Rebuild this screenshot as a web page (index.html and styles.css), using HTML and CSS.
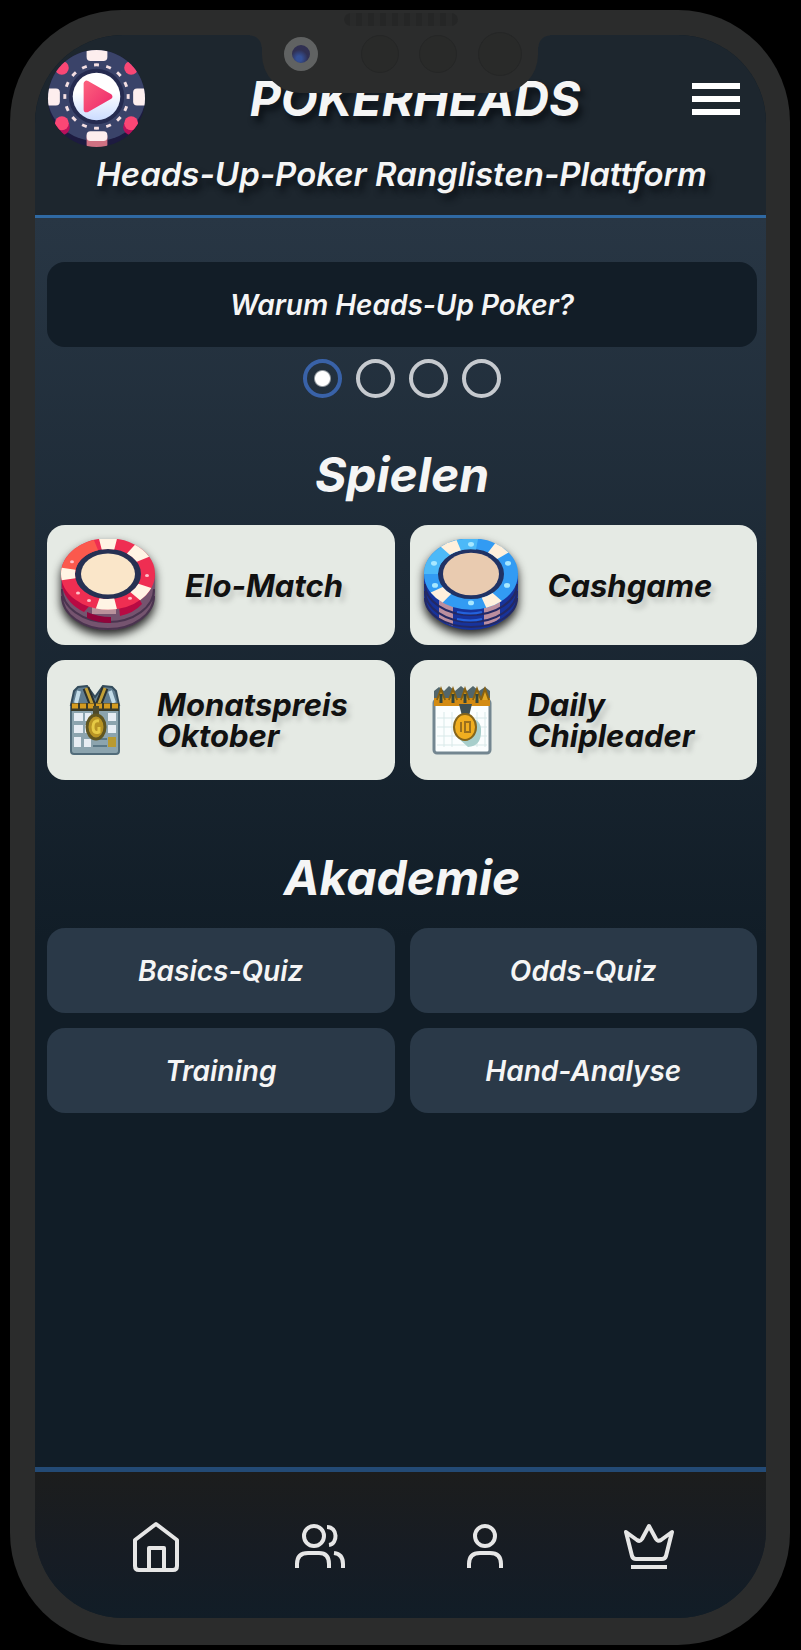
FILE: index.html
```html
<!DOCTYPE html>
<html lang="de">
<head>
<meta charset="utf-8">
<meta name="viewport" content="width=device-width, initial-scale=1">
<title>Pokerheads</title>
<link rel="stylesheet" href="styles.css">
</head>
<body>
<div class="phone">
  <div class="speaker"></div>
  <div class="notch">
    <span class="camera"></span>
    <span class="sensor"></span>
    <span class="sensor"></span>
    <span class="sensor sensor-large"></span>
  </div>
  <div class="screen">
    <header class="header">
      <div class="header-row">
        <a class="logo" href="#" aria-label="Startseite">
          <svg viewBox="0 0 100 100">
            <defs>
              <clipPath id="chip"><circle cx="50" cy="50" r="49"/></clipPath>
              <linearGradient id="face" x2="0" y2="1"><stop offset=".4" stop-color="#fff"/><stop offset="1" stop-color="#cbdcff"/></linearGradient>
              <linearGradient id="play" x2="1" y2="1"><stop offset="0" stop-color="#fb5d7c"/><stop offset="1" stop-color="#ee2a6c"/></linearGradient>
            </defs>
            <g clip-path="url(#chip)">
              <rect width="100" height="100" fill="#1d1b40"/>
              <ellipse cx="50" cy="45" rx="50" ry="48" fill="#3a4369"/>
              <g fill="#b8105b"><circle cx="15" cy="79" r="8"/><circle cx="85" cy="79" r="8"/></g>
              <g fill="#fa4775"><circle cx="15" cy="19" r="7"/><circle cx="85" cy="19" r="7"/><circle cx="15" cy="75" r="7"/><circle cx="85" cy="75" r="7"/></g>
              <rect x="40" y="86" width="21" height="14" rx="3" fill="#cf7182"/>
              <g fill="#fdeeee"><rect x="40" y="-3" width="21" height="15" rx="4"/><rect x="40" y="83" width="21" height="10" rx="4"/><rect x="-3" y="40" width="16" height="17" rx="4"/><rect x="87" y="40" width="16" height="17" rx="4"/></g>
            </g>
            <circle cx="50" cy="48" r="28" fill="#252b50"/>
            <circle cx="50" cy="48" r="32" fill="none" stroke="#f4dfe2" stroke-width="3" pathLength="160" stroke-dasharray="4 6" stroke-dashoffset="2"/>
            <circle cx="50" cy="48" r="24" fill="url(#face)"/>
            <path d="M40 35v26l23-13z" fill="url(#play)" stroke="url(#play)" stroke-width="6" stroke-linejoin="round"/>
          </svg>
        </a>
        <h1 class="title">POKERHEADS</h1>
        <button class="menu" type="button" aria-label="Menü">
          <svg viewBox="0 0 48 36"><path d="M0 5h48M0 18h48M0 31h48" stroke="#fff" stroke-width="6"/></svg>
        </button>
      </div>
      <p class="subtitle">Heads-Up-Poker Ranglisten-Plattform</p>
    </header>

    <main class="main">
      <button class="tile promo" type="button">Warum Heads-Up Poker?</button>
      <div class="dots" role="radiogroup" aria-label="Thema">
        <input type="radio" name="topic" aria-label="Thema 1" checked>
        <input type="radio" name="topic" aria-label="Thema 2">
        <input type="radio" name="topic" aria-label="Thema 3">
        <input type="radio" name="topic" aria-label="Thema 4">
      </div>

      <h2 class="heading">Spielen</h2>
      <div class="grid">
        <a class="card" href="#">
          <svg class="stack" viewBox="0 0 94 92">
            <path d="M0 34v22a47 35 0 0 0 94 0V34z" fill="#75546f"/>
            <path d="M1 50a46 33 0 0 0 92 0M1 57a46 33 0 0 0 92 0" fill="none" stroke="#4a344f" stroke-width="2"/>
            <path d="M1 38v10q5 17 22 25l8-9zM58 68l1 9q14-3 22-12l-4-8z" fill="#b80a43"/>
            <path d="M26 73q11 5 24 5v6q-13 0-24-5z" fill="#91043b"/>
            <path d="M31 67h24v8H31z" fill="#b9919b"/>
            <g transform="translate(47 35) scale(1 .76)" fill="none">
              <circle r="40" fill="#263153" stroke="#ef2e52" stroke-width="14"/>
              <path d="M-40 0A40 40 0 0 1-12-38" stroke="#fb594d" stroke-width="14"/>
              <circle r="40" stroke="#fff4e4" stroke-width="14" pathLength="360" stroke-dasharray="0 23 24 32 26 65 20 69 22 24 26 29"/>
              <circle r="27" fill="#fae6c9"/>
              <g fill="#ffc3ca"><circle cx="39" cy="2" r="2"/><circle cx="22" cy="32" r="2"/><circle cx="-30" cy="25" r="2"/><circle cx="-19" cy="35" r="2"/><circle cx="-36" cy="-16" r="2"/></g>
            </g>
          </svg>
          <span class="card-text">Elo-Match</span>
        </a>
        <a class="card" href="#">
          <svg class="stack" viewBox="0 0 94 92">
            <path d="M0 34v22a47 35 0 0 0 94 0V34z" fill="#17339b"/>
            <path d="M15 58l14 8v21q-8-3-14-8zM60 67l16-8v20q-7 6-16 8z" fill="#bb8e9f"/>
            <path d="M1 45a46 31 0 0 0 92 0M1 52a46 31 0 0 0 92 0M1 59a46 29 0 0 0 92 0" fill="none" stroke="#232965" stroke-width="2"/>
            <path d="M33 73q14 3 25 0M33 80q14 3 25 0" fill="none" stroke="#2362dd" stroke-width="2"/>
            <g transform="translate(47 35) scale(1 .76)" fill="none">
              <circle r="40" fill="#203264" stroke="#329bf3" stroke-width="14"/>
              <path d="M-40 0A40 40 0 0 1 6-39" stroke="#4cb9f8" stroke-width="14"/>
              <circle r="40" stroke="#fff0dc" stroke-width="14" pathLength="360" stroke-dasharray="0 49 22 56 22 81 22 49 22 37"/>
              <circle r="28" fill="#e9cbb0"/>
              <g fill="#a8e8ff"><circle cy="-39" r="3"/><circle cy="38" r="3"/><circle cx="37" cy="-14" r="3"/><circle cx="-37" cy="-14" r="3"/><circle cx="36" cy="15" r="3"/><circle cx="-36" cy="15" r="3"/></g>
            </g>
          </svg>
          <span class="card-text">Cashgame</span>
        </a>
        <a class="card" href="#">
          <svg class="calendar" viewBox="0 0 52 70">
            <rect x="2" y="18" width="48" height="51" rx="3" fill="#8ca4ae" stroke="#526c7a" stroke-width="2"/>
            <path d="M5 28h9v8H5zM5 40h9v8H5zM5 52h7v10H5zM16 28h6v8h-6zM16 40h5v8h-5zM39 28h8v8h-8zM39 40h8v8h-8zM15 54h7v8h-7z" fill="#e7edf3"/>
            <path d="M24 54h14M24 61h14" stroke="#5b7886" stroke-width="2"/>
            <path d="M2 20 5 6l4-4 9-1 8 11 8-11 9 1 4 4 3 14z" fill="#607d90" stroke="#344c5c" stroke-width="2"/>
            <path d="M10 6 7 18M41 6l4 12" stroke="#c3dce8" stroke-width="4"/>
            <path d="m17 3 7 18M36 3l-7 18" stroke="#2b3231" stroke-width="7"/>
            <path d="m17 3 7 18M36 3l-7 18" stroke="#c2a037" stroke-width="3"/>
            <path d="M2 22h48" stroke="#3b3b29" stroke-width="8"/>
            <path d="M3 21h47" stroke="#d49b20" stroke-width="5" stroke-dasharray="6 2"/>
            <path d="M27 21v12" stroke="#4c4a2d" stroke-width="6"/>
            <ellipse cx="27" cy="42" rx="9" ry="12" fill="#b89424" stroke="#615620" stroke-width="3"/>
            <path d="M30 36q-6-1-6 6t6 5v-5" fill="none" stroke="#e6ca45" stroke-width="3"/>
            <rect x="39" y="52" width="8" height="10" fill="#b99a31"/>
          </svg>
          <span class="card-text">Monatspreis Oktober</span>
        </a>
        <a class="card" href="#">
          <svg class="calendar calendar-wide" viewBox="0 0 60 70">
            <rect x="2" y="15" width="56" height="53" rx="3" fill="#fbfefe" stroke="#738690" stroke-width="3"/>
            <path d="M12 27v35M20 27v35M45 27v35M53 27v35M5 33h50M5 42h50M5 51h50M5 60h50" stroke="#d8e9e9" stroke-width="1"/>
            <path d="M35 33q15 0 14 14 0 14-13 15l-10-9z" fill="#a7cecb"/>
            <path d="M2 21V6l5-4 5 4 5-5 6 5 6-5 6 5 6-5 6 5 6-4 5 4v15z" fill="#52666b"/>
            <path d="M2 13h56v8H2z" fill="#d38b13"/>
            <path d="M5 15 9 4l4 11M17 15l4-11 4 11M29 15l4-11 4 11M41 15l4-11 4 11M49 15l4-11 4 11" fill="#e0a928" stroke="#8a610e" stroke-width="2"/>
            <path d="M9 9v9M21 9v9M33 9v9M45 9v9" stroke="#31453e" stroke-width="3"/>
            <path d="M27 19h13l-3 12h-7z" fill="#3f5054"/>
            <ellipse cx="33" cy="42" rx="11" ry="13" fill="#f0ae20" stroke="#85651c" stroke-width="2"/>
            <path d="M29 37v10M33 37h5v10h-5z" fill="none" stroke="#9b701d" stroke-width="2"/>
          </svg>
          <span class="card-text">Daily Chipleader</span>
        </a>
      </div>

      <h2 class="heading heading-academy">Akademie</h2>
      <div class="grid">
        <button class="tile" type="button">Basics-Quiz</button>
        <button class="tile" type="button">Odds-Quiz</button>
        <button class="tile" type="button">Training</button>
        <button class="tile" type="button">Hand-Analyse</button>
      </div>
    </main>

    <nav class="nav" aria-label="Hauptnavigation">
      <a href="#" aria-label="Start"><svg viewBox="0 0 52 52"><path d="M5 19 26 3l21 16v26q0 4-4 4H9q-4 0-4-4zM19 49V27h15v22"/></svg></a>
      <a href="#" aria-label="Spieler"><svg viewBox="0 0 52 52"><circle cx="20" cy="15" r="10"/><path d="M3 47v-4q0-11 11-11h11q10 0 10 11v4M33 6c11 0 11 17 2 18M40 32q9 1 9 11v4"/></svg></a>
      <a href="#" aria-label="Profil"><svg viewBox="0 0 52 52"><circle cx="26" cy="15" r="10"/><path d="M10 47v-4q0-11 11-11h10q11 0 11 11v4"/></svg></a>
      <a href="#" aria-label="Rangliste"><svg viewBox="0 0 52 52"><path d="m3 11 11 8q3 2 5-1l7-13 7 13q2 3 5 1l11-8-6 24q-1 3-4 3H13q-3 0-4-3zM8 46h36"/></svg></a>
    </nav>
  </div>
</div>
</body>
</html>
```
FILE: styles.css
```css
* {
  box-sizing: border-box;
}

body {
  margin: 0;
  min-height: 100vh;
  padding: 10px 11px 5px 10px;
  display: flex;
  background: #000;
  color: #f5f5f5;
  font-family: Inter, "Open Sans", sans-serif;
  font-style: italic;
  font-weight: 600;
}

a {
  color: inherit;
  text-decoration: none;
}

button {
  border: 0;
  font: inherit;
  color: inherit;
  cursor: pointer;
}

svg {
  display: block;
}

.phone {
  position: relative;
  flex: 1;
  display: flex;
  padding: 25px 24px 27px 25px;
  border-radius: 112px;
  background: #2b2c2c;
}

.screen {
  flex: 1;
  min-width: 0;
  display: flex;
  flex-direction: column;
  overflow: hidden;
  border-radius: 88px;
  background: #111d27;
}

.speaker {
  position: absolute;
  top: 3px;
  left: 50%;
  width: 114px;
  height: 13px;
  margin-left: -56px;
  border-radius: 7px;
  background: repeating-linear-gradient(90deg, #252626 0 6px, #292a2a 6px 12px);
}

.notch {
  position: absolute;
  top: 24px;
  left: 50%;
  width: 276px;
  height: 59px;
  margin-left: -138px;
  padding: 0 16px 20px 22px;
  display: flex;
  align-items: center;
  justify-content: space-between;
  border-radius: 0 0 38px 38px;
  background: #2b2c2c;
}

.notch::before,
.notch::after {
  content: "";
  position: absolute;
  top: 1px;
  width: 12px;
  height: 12px;
}

.notch::before {
  right: 100%;
  background: radial-gradient(circle at 0 100%, transparent 11px, #2b2c2c 12px);
}

.notch::after {
  left: 100%;
  background: radial-gradient(circle at 100% 100%, transparent 11px, #2b2c2c 12px);
}

.camera {
  width: 34px;
  height: 34px;
  margin-right: 22px;
  border: 8px solid #606262;
  border-radius: 50%;
  background: radial-gradient(circle at 40% 75%, #345096 0 15%, #303052 50%);
}

.sensor {
  width: 38px;
  height: 38px;
  border: 1px solid #252626;
  border-radius: 50%;
  background: #292a29;
}

.sensor-large {
  width: 44px;
  height: 44px;
}

.header {
  padding: 14px 18px 21px 12px;
  border-bottom: 3px solid #2f69a3;
  background: #1d262e;
  text-shadow: 4px 6px 6px #0c1218;
}

.header-row {
  display: grid;
  grid-template-columns: 99px 1fr 64px;
  align-items: center;
}

.title {
  margin: 0;
  text-align: center;
  font-size: 48px;
  line-height: 56px;
  font-weight: 700;
}

.menu {
  padding: 8px;
  background: none;
}

.subtitle {
  margin: 6px 0 0 8px;
  text-align: center;
  font-size: 33px;
  line-height: 40px;
}

.main {
  flex: 1;
  padding: 44px 9px 64px 12px;
  background: linear-gradient(#283644, #111d27 720px);
}

.tile {
  min-height: 85px;
  padding: 8px 12px;
  border-radius: 18px;
  background: #2a3948;
  font-size: 28px;
  line-height: 32px;
}

.promo {
  width: 100%;
  background: #121d27;
}

.dots {
  margin-top: 12px;
  display: flex;
  justify-content: center;
  gap: 14px;
}

.dots input {
  appearance: none;
  width: 39px;
  height: 39px;
  margin: 0;
  border: 4px solid #c6cacf;
  border-radius: 50%;
}

.dots input:checked {
  border-color: #3962a8;
  background: radial-gradient(circle, #fff 7px, transparent 9px);
}

.heading {
  margin: 48px 0 21px;
  text-align: center;
  font-size: 48px;
  line-height: 58px;
  font-weight: 700;
}

.heading-academy {
  margin-top: 69px;
}

.grid {
  display: grid;
  grid-template-columns: 1fr 1fr;
  gap: 15px;
}

.card {
  min-height: 120px;
  padding: 12px 14px;
  display: flex;
  align-items: center;
  border-radius: 18px;
  background: #e5eae4;
  color: #111;
  font-size: 31px;
  line-height: 31px;
  font-weight: 700;
  text-shadow: 4px 5px 5px #c5cac5;
}

.card-text {
  flex: 1;
  padding-left: 30px;
}

.stack {
  flex: none;
  width: 94px;
  filter: drop-shadow(0 5px 5px #222);
}

.calendar {
  flex: none;
  width: 52px;
  margin-left: 8px;
}

.calendar-wide {
  width: 60px;
}

.calendar + .card-text {
  padding-left: 36px;
}

.nav {
  padding: 49px 91px 45px 95px;
  display: flex;
  justify-content: space-between;
  border-top: 5px solid #234a75;
  background: linear-gradient(#1c1d1d, #161c24 60%, #111d27);
}

.nav svg {
  width: 52px;
  height: 52px;
  fill: none;
  stroke: #e6e6e6;
  stroke-width: 4;
  stroke-linejoin: round;
}
```
